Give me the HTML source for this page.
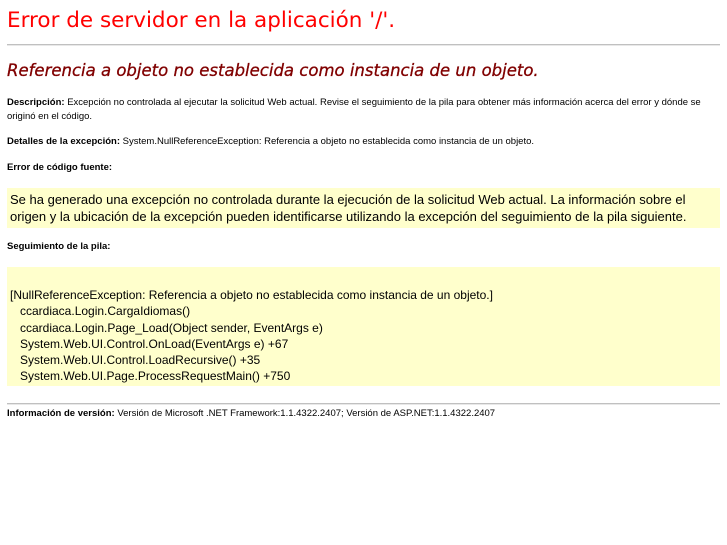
<!DOCTYPE html>
<html><head><meta charset="utf-8"><style>
body{margin:0;background:#fff;font-family:"Liberation Sans",Arial,sans-serif;color:#000;width:727px;height:545px;overflow:hidden}
.h1{position:absolute;left:7px;top:8px;font-family:"DejaVu Sans",Verdana,sans-serif;font-size:21.5px;color:red;white-space:nowrap}
.hr{position:absolute;left:7px;width:713px;height:1px;background:#c0c0c0;border-bottom:1px solid #e8e8e8}
.h2{position:absolute;left:7px;top:61px;font-family:"DejaVu Sans",Verdana,sans-serif;font-size:16.5px;font-style:italic;color:#800000;white-space:nowrap;-webkit-text-stroke:0.3px #800000}
.s{position:absolute;left:7px;font-size:9.5px;line-height:14px;width:700px}
.box{position:absolute;left:7px;width:713px;background:#ffffcc;font-size:13px;line-height:17px}
</style></head><body>
<div class="h1">Error de servidor en la aplicación '/'.</div>
<div class="hr" style="top:44px"></div>
<div class="h2">Referencia a objeto no establecida como instancia de un objeto.</div>
<div class="s" style="top:96px"><b>Descripción: </b>Excepción no controlada al ejecutar la solicitud Web actual. Revise el seguimiento de la pila para obtener más información acerca del error y dónde se<br>originó en el código.</div>
<div class="s" style="top:135px;white-space:nowrap"><b>Detalles de la excepción: </b>System.NullReferenceException: Referencia a objeto no establecida como instancia de un objeto.</div>
<div class="s" style="top:161px"><b>Error de código fuente:</b></div>
<div class="box" style="top:188px;height:40px;padding:0 0 0 3px;box-sizing:border-box;padding-top:3px">Se ha generado una excepción no controlada durante la ejecución de la solicitud Web actual. La información sobre el origen y la ubicación de la excepción pueden identificarse utilizando la excepción del seguimiento de la pila siguiente.</div>
<div class="s" style="top:240px"><b>Seguimiento de la pila:</b></div>
<div class="box" style="top:267px;height:119px;white-space:pre;padding:20px 0 0 3px;box-sizing:border-box;font-size:12px;line-height:16.3px">[NullReferenceException: Referencia a objeto no establecida como instancia de un objeto.]
   ccardiaca.Login.CargaIdiomas()
   ccardiaca.Login.Page_Load(Object sender, EventArgs e)
   System.Web.UI.Control.OnLoad(EventArgs e) +67
   System.Web.UI.Control.LoadRecursive() +35
   System.Web.UI.Page.ProcessRequestMain() +750</div>
<div class="hr" style="top:403px"></div>
<div class="s" style="top:407px;white-space:nowrap"><b>Información de versión: </b>Versión de Microsoft .NET Framework:1.1.4322.2407; Versión de ASP.NET:1.1.4322.2407</div>
</body></html>
